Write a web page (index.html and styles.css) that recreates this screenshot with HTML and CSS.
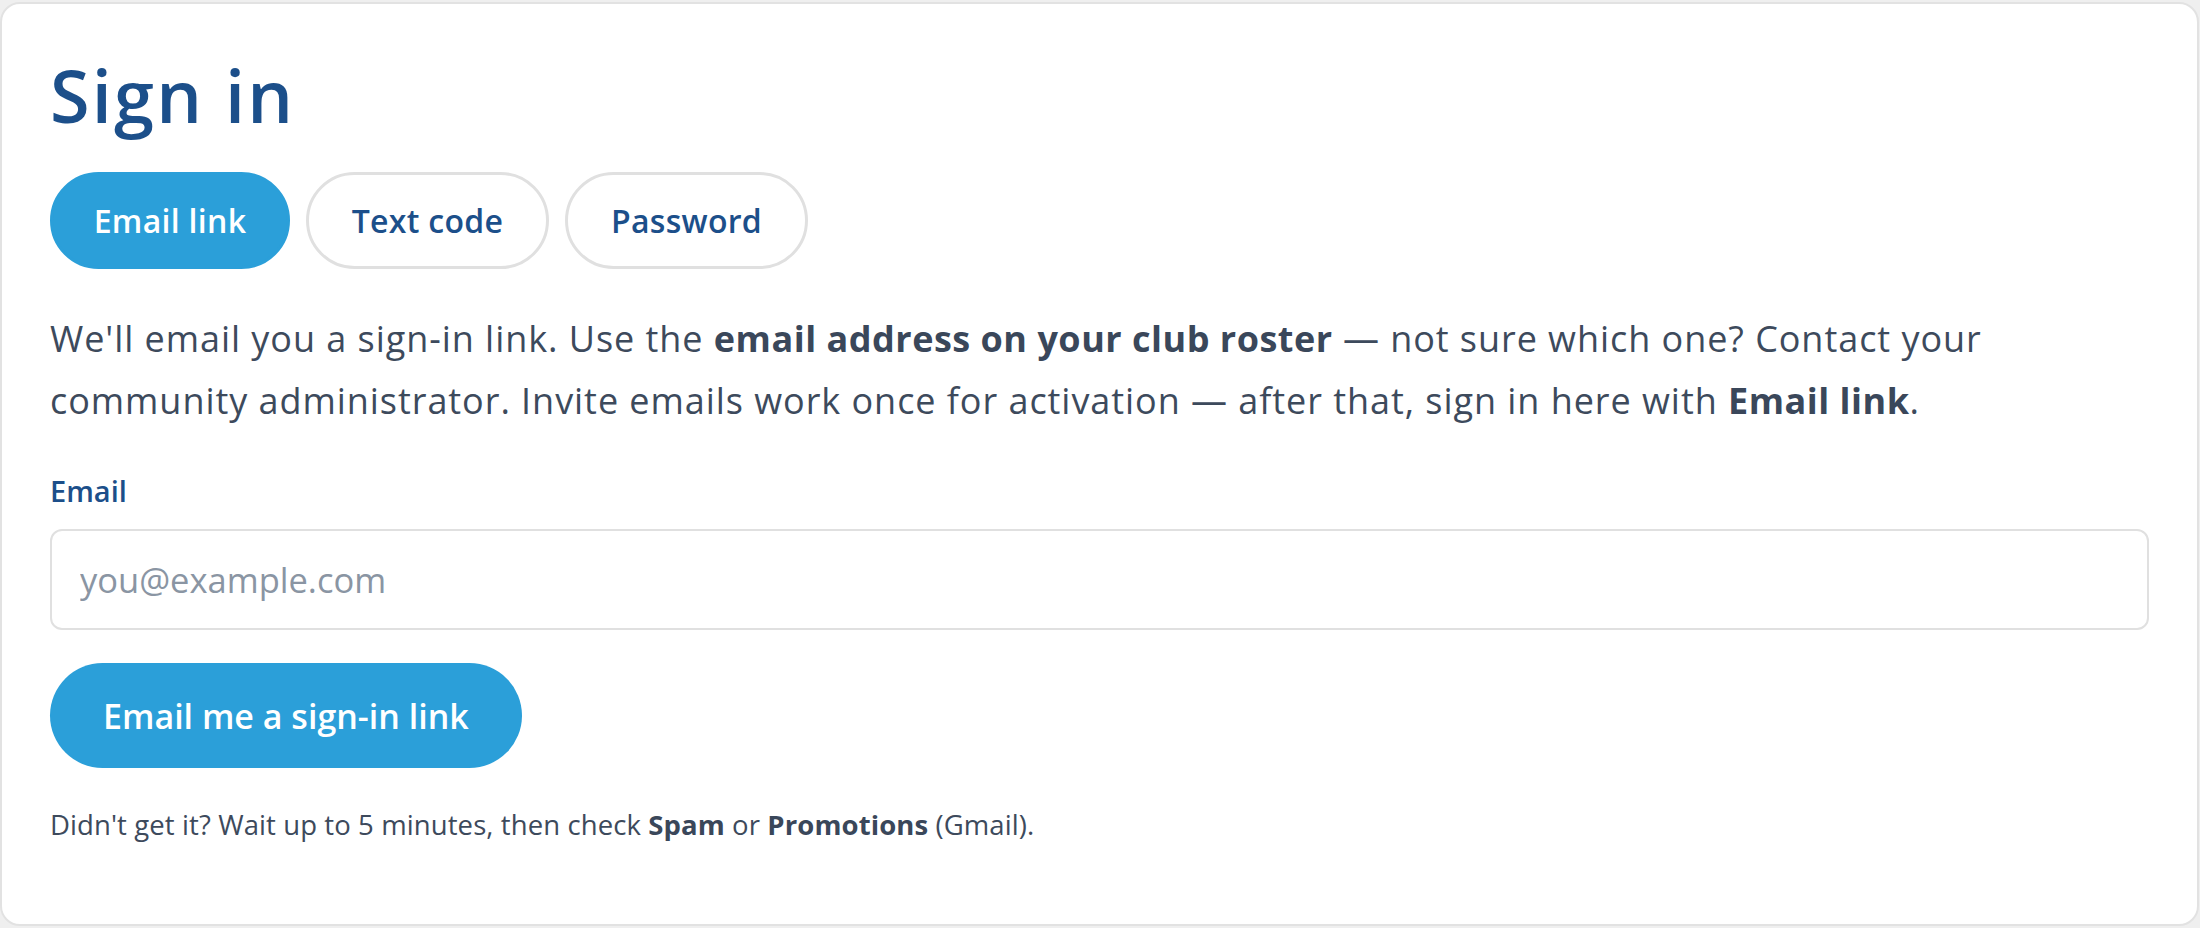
FILE: index.html
```html
<!DOCTYPE html>
<html lang="en">
<head>
<meta charset="utf-8">
<title>Sign in</title>
<link rel="stylesheet" href="styles.css">
</head>
<body>
<main class="card">
  <h1 class="title">Sign in</h1>
  <div class="tabs">
    <button class="tab tab-active" type="button">Email link</button>
    <button class="tab" type="button">Text code</button>
    <button class="tab" type="button">Password</button>
  </div>
  <p class="intro">We'll email you a sign-in link. Use the <strong>email address on your club roster</strong> — not sure which one? Contact your community administrator. Invite emails work once for activation — after that, sign in here with <strong>Email link</strong>.</p>
  <label class="label" for="email">Email</label>
  <input class="input" id="email" type="email" placeholder="you@example.com">
  <button class="submit" type="button">Email me a sign-in link</button>
  <p class="note">Didn't get it? Wait up to 5 minutes, then check <strong>Spam</strong> or <strong>Promotions</strong> (Gmail).</p>
</main>
</body>
</html>
```
FILE: styles.css
```css
* { box-sizing: border-box; }
html, body { margin: 0; padding: 0; }
body {
  background: #efefef;
  font-family: "Open Sans", "Noto Sans", sans-serif;
  color: #3d4a5c;
  padding: 2px 1px 2px 0;
}
.card {
  background: #fff;
  border: 2px solid #e2e2e2;
  border-radius: 20px;
  height: 924px;
  padding: 48px 48px 0 48px;
  display: flex;
  flex-direction: column;
  align-items: flex-start;
}
.title {
  margin: 0 0 34px 0;
  font-size: 72px;
  line-height: 86px;
  font-weight: 600;
  color: #1c4f8a;
  letter-spacing: 2.2px;
}
.tabs {
  display: flex;
  gap: 16px;
}
.tab {
  height: 97px;
  min-width: 243px;
  padding: 0 40px;
  border-radius: 999px;
  border: 3px solid #e0e0e0;
  background: #fff;
  color: #1c4f8a;
  font-family: inherit;
  font-size: 32px;
  font-weight: 600;
  letter-spacing: 0.3px;
  cursor: pointer;
}
.tab-active {
  min-width: 240px;
  background: #2b9fd9;
  border-color: #2b9fd9;
  color: #fff;
}
.intro {
  margin: 39px 0 0 0;
  font-size: 36px;
  line-height: 61.7px;
  letter-spacing: 0.95px;
}
.intro strong, .note strong { font-weight: 700; color: #3a475a; letter-spacing: 0.5px; }
.label {
  margin-top: 38px;
  font-size: 29px;
  line-height: 43px;
  font-weight: 600;
  color: #1c4f8a;
}
.input {
  margin-top: 17px;
  width: 100%;
  height: 101px;
  border: 2px solid #e0e0e0;
  border-radius: 12px;
  padding: 0 28px;
  font-family: inherit;
  font-size: 34.5px;
  color: #3d4a5c;
  outline: none;
}
.input::placeholder { color: #8a95a3; }
.submit {
  margin-top: 33px;
  height: 105px;
  padding: 0 53px;
  border: none;
  border-radius: 999px;
  background: #2b9fd9;
  color: #fff;
  font-family: inherit;
  font-size: 34px;
  font-weight: 600;
  cursor: pointer;
}
.note {
  margin: 37px 0 0 0;
  font-size: 27.5px;
  line-height: 40px;
  letter-spacing: 0.1px;
}
.note strong { letter-spacing: 0.1px; }
```
